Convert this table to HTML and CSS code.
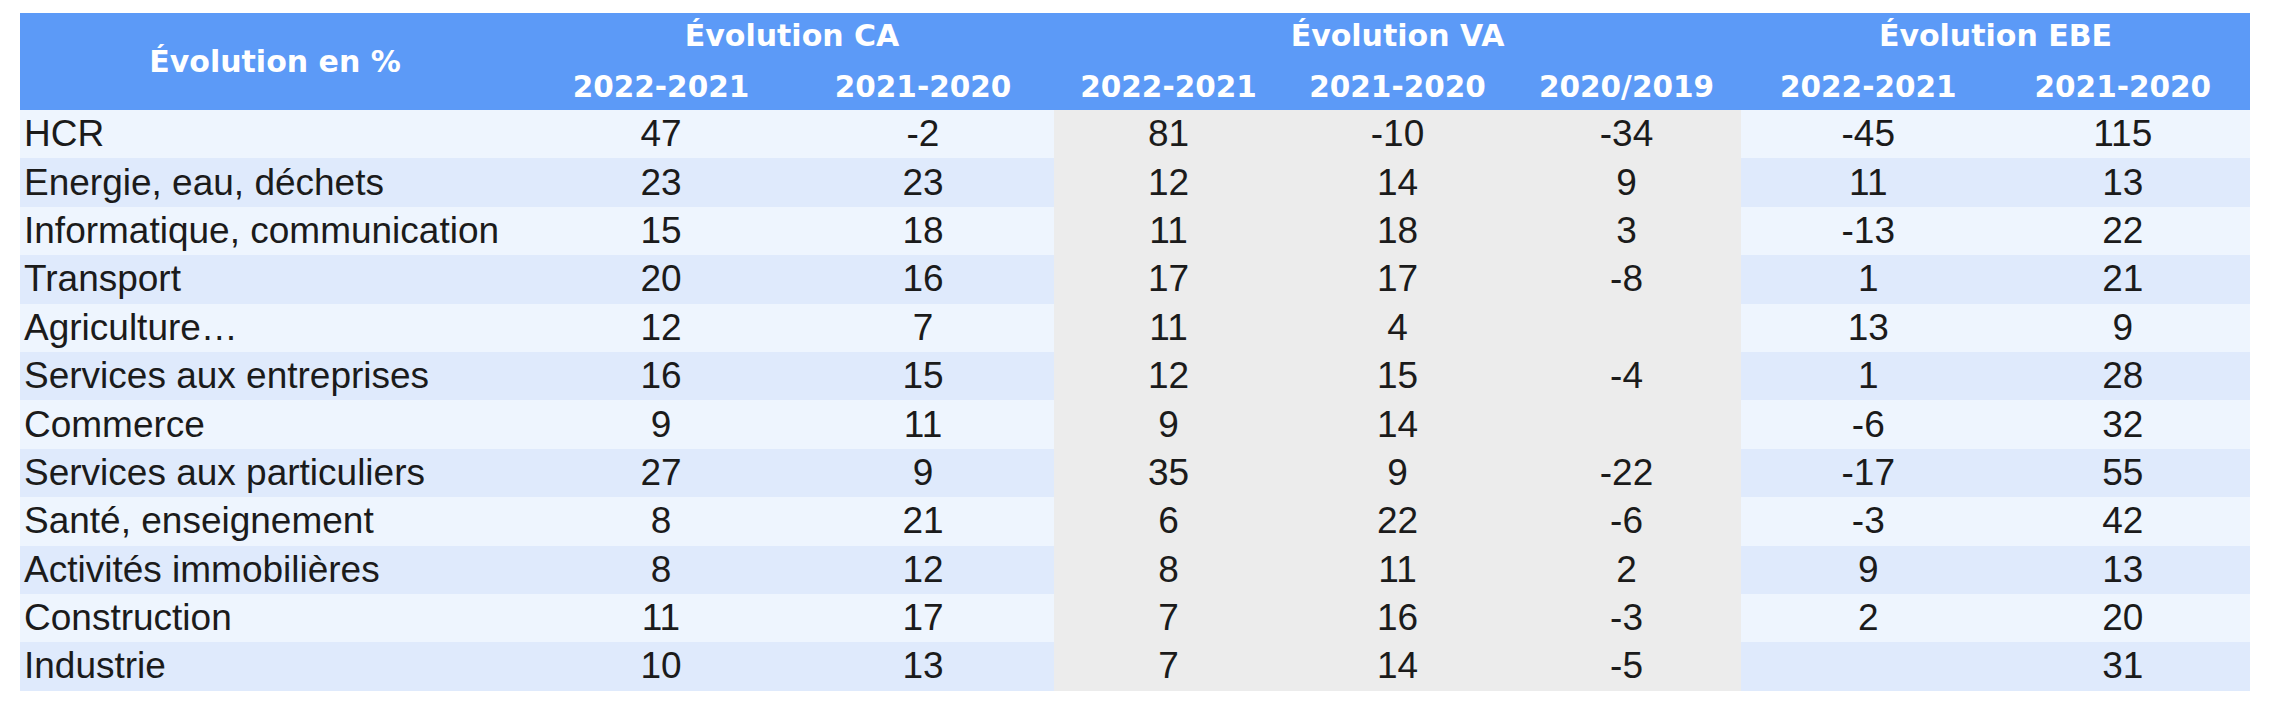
FILE: index.html
```html
<!DOCTYPE html>
<html lang="fr">
<head>
<meta charset="utf-8">
<title>Évolution en %</title>
<link rel="stylesheet" href="styles.css">
</head>
<body>
<div class="page">
<table class="evo">
<colgroup>
<col class="c-label">
<col class="c-ca"><col class="c-ca">
<col class="c-va"><col class="c-va"><col class="c-va">
<col class="c-ebe"><col class="c-ebe">
</colgroup>
<thead>
<tr class="h1">
<th rowspan="2" class="h-label">Évolution en %</th>
<th colspan="2">Évolution CA</th>
<th colspan="3">Évolution VA</th>
<th colspan="2">Évolution EBE</th>
</tr>
<tr class="h2">
<th>2022-2021</th><th>2021-2020</th>
<th>2022-2021</th><th>2021-2020</th><th>2020/2019</th>
<th>2022-2021</th><th>2021-2020</th>
</tr>
</thead>
<tbody>
<tr><td class="lbl">HCR</td><td>47</td><td>-2</td><td class="va">81</td><td class="va">-10</td><td class="va">-34</td><td>-45</td><td>115</td></tr>
<tr><td class="lbl">Energie, eau, déchets</td><td>23</td><td>23</td><td class="va">12</td><td class="va">14</td><td class="va">9</td><td>11</td><td>13</td></tr>
<tr><td class="lbl">Informatique, communication</td><td>15</td><td>18</td><td class="va">11</td><td class="va">18</td><td class="va">3</td><td>-13</td><td>22</td></tr>
<tr><td class="lbl">Transport</td><td>20</td><td>16</td><td class="va">17</td><td class="va">17</td><td class="va">-8</td><td>1</td><td>21</td></tr>
<tr><td class="lbl">Agriculture…</td><td>12</td><td>7</td><td class="va">11</td><td class="va">4</td><td class="va"></td><td>13</td><td>9</td></tr>
<tr><td class="lbl">Services aux entreprises</td><td>16</td><td>15</td><td class="va">12</td><td class="va">15</td><td class="va">-4</td><td>1</td><td>28</td></tr>
<tr><td class="lbl">Commerce</td><td>9</td><td>11</td><td class="va">9</td><td class="va">14</td><td class="va"></td><td>-6</td><td>32</td></tr>
<tr><td class="lbl">Services aux particuliers</td><td>27</td><td>9</td><td class="va">35</td><td class="va">9</td><td class="va">-22</td><td>-17</td><td>55</td></tr>
<tr><td class="lbl">Santé, enseignement</td><td>8</td><td>21</td><td class="va">6</td><td class="va">22</td><td class="va">-6</td><td>-3</td><td>42</td></tr>
<tr><td class="lbl">Activités immobilières</td><td>8</td><td>12</td><td class="va">8</td><td class="va">11</td><td class="va">2</td><td>9</td><td>13</td></tr>
<tr><td class="lbl">Construction</td><td>11</td><td>17</td><td class="va">7</td><td class="va">16</td><td class="va">-3</td><td>2</td><td>20</td></tr>
<tr><td class="lbl">Industrie</td><td>10</td><td>13</td><td class="va">7</td><td class="va">14</td><td class="va">-5</td><td></td><td>31</td></tr>
</tbody>
</table>
</div>
</body>
</html>
```

FILE: styles.css
```css
html, body {
  margin: 0;
  padding: 0;
  background: #ffffff;
}

.page {
  padding: 13px 20px;
}

.evo {
  border-collapse: collapse;
  border-spacing: 0;
  table-layout: fixed;
  width: 2230px;
  font-family: "Liberation Sans", Arial, sans-serif;
  color: #1b1b1b;
}

.c-label { width: 510px; }
.c-ca { width: 262px; }
.c-va { width: 229px; }
.c-ebe { width: 254.5px; }

.evo thead th {
  background: #5c9af7;
  color: #ffffff;
  font-family: "DejaVu Sans", Verdana, sans-serif;
  font-weight: 700;
  padding: 0;
  text-align: center;
  white-space: nowrap;
}

.evo .h1 { height: 48.5px; }
.evo .h2 { height: 48.5px; }

.evo .h1 th {
  font-size: 30px;
  vertical-align: middle;
  padding-bottom: 4px;
}

.evo .h1 th.h-label {
  font-size: 30px;
  padding-bottom: 0;
}

.evo .h2 th {
  font-size: 29.5px;
  padding-top: 2px;
}

.evo tbody tr {
  height: 48.4px;
}

.evo tbody td {
  padding: 0;
  font-size: 37px;
  text-align: center;
  vertical-align: middle;
  white-space: nowrap;
  background: #eef5fe;
}

.evo tbody tr:nth-child(even) td {
  background: #dfeafc;
}

.evo tbody td.lbl {
  text-align: left;
  padding-left: 4px;
}

.evo tbody td.va,
.evo tbody tr:nth-child(even) td.va {
  background: #ececec;
}
```
